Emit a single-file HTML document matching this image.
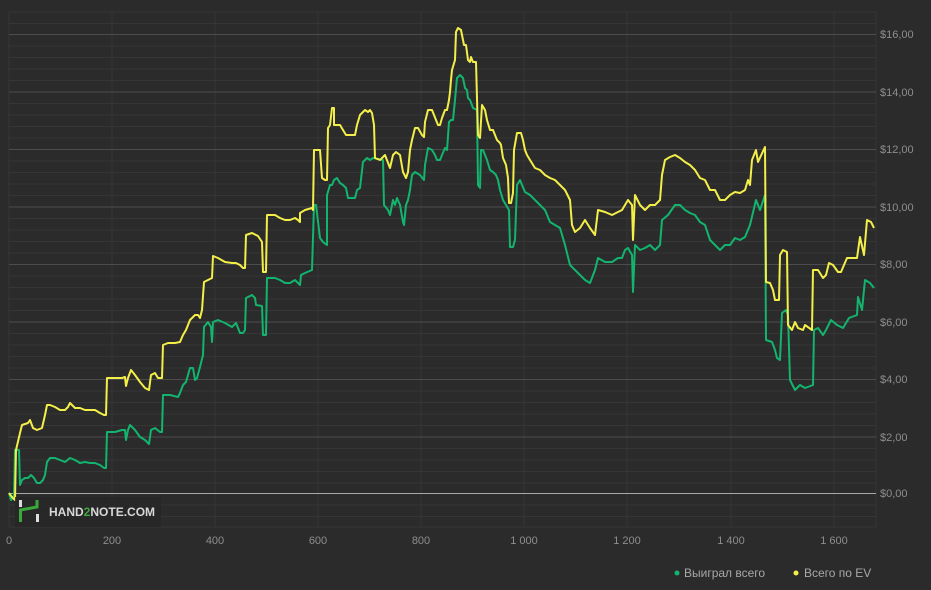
<!DOCTYPE html>
<html><head><meta charset="utf-8"><style>
html,body{margin:0;padding:0;background:#2b2b2b;width:931px;height:590px;overflow:hidden}
svg text{font-family:"Liberation Sans",sans-serif}
</style></head><body>
<svg width="931" height="590" viewBox="0 0 931 590" xmlns="http://www.w3.org/2000/svg">
<rect width="931" height="590" fill="#2b2b2b"/>
<g stroke="#363636" stroke-width="1">
<line x1="9" y1="12" x2="876" y2="12"/>
<line x1="9" y1="23.5" x2="876" y2="23.5"/><line x1="9" y1="46" x2="876" y2="46"/><line x1="9" y1="57.5" x2="876" y2="57.5"/><line x1="9" y1="69" x2="876" y2="69"/><line x1="9" y1="80.5" x2="876" y2="80.5"/>
<line x1="9" y1="103.5" x2="876" y2="103.5"/><line x1="9" y1="115" x2="876" y2="115"/><line x1="9" y1="126.5" x2="876" y2="126.5"/><line x1="9" y1="138" x2="876" y2="138"/>
<line x1="9" y1="161" x2="876" y2="161"/><line x1="9" y1="172.5" x2="876" y2="172.5"/><line x1="9" y1="184" x2="876" y2="184"/><line x1="9" y1="195.5" x2="876" y2="195.5"/>
<line x1="9" y1="218.5" x2="876" y2="218.5"/><line x1="9" y1="230" x2="876" y2="230"/><line x1="9" y1="241.5" x2="876" y2="241.5"/><line x1="9" y1="253" x2="876" y2="253"/>
<line x1="9" y1="276" x2="876" y2="276"/><line x1="9" y1="287.5" x2="876" y2="287.5"/><line x1="9" y1="299" x2="876" y2="299"/><line x1="9" y1="310.5" x2="876" y2="310.5"/>
<line x1="9" y1="333.5" x2="876" y2="333.5"/><line x1="9" y1="345" x2="876" y2="345"/><line x1="9" y1="356.5" x2="876" y2="356.5"/><line x1="9" y1="368" x2="876" y2="368"/>
<line x1="9" y1="391" x2="876" y2="391"/><line x1="9" y1="402.5" x2="876" y2="402.5"/><line x1="9" y1="414" x2="876" y2="414"/><line x1="9" y1="425.5" x2="876" y2="425.5"/>
<line x1="9" y1="448.5" x2="876" y2="448.5"/><line x1="9" y1="460" x2="876" y2="460"/><line x1="9" y1="471.5" x2="876" y2="471.5"/><line x1="9" y1="483" x2="876" y2="483"/>
<line x1="9" y1="505" x2="876" y2="505"/><line x1="9" y1="516.5" x2="876" y2="516.5"/><line x1="9" y1="527" x2="876" y2="527"/>
<line x1="9" y1="12" x2="9" y2="527"/><line x1="112" y1="12" x2="112" y2="527"/><line x1="215" y1="12" x2="215" y2="527"/><line x1="318" y1="12" x2="318" y2="527"/><line x1="421" y1="12" x2="421" y2="527"/><line x1="524" y1="12" x2="524" y2="527"/><line x1="627" y1="12" x2="627" y2="527"/><line x1="731" y1="12" x2="731" y2="527"/><line x1="834" y1="12" x2="834" y2="527"/><line x1="876" y1="12" x2="876" y2="527"/>
</g>
<g stroke="#4c4c4c" stroke-width="1">
<line x1="9" y1="34.5" x2="876" y2="34.5"/><line x1="9" y1="92" x2="876" y2="92"/><line x1="9" y1="149.5" x2="876" y2="149.5"/><line x1="9" y1="207" x2="876" y2="207"/><line x1="9" y1="264.5" x2="876" y2="264.5"/><line x1="9" y1="322" x2="876" y2="322"/><line x1="9" y1="379.5" x2="876" y2="379.5"/><line x1="9" y1="437" x2="876" y2="437"/>
</g>
<line x1="9" y1="493.5" x2="876" y2="493.5" stroke="#a8a8a8" stroke-width="1"/>
<g fill="none" stroke-width="2" stroke-linejoin="round">
<polyline stroke="#12b46e" points="9,493 11,500 14,496 15,450 19,450 20,485 22,480 25,478 28,478 31,475 34,478 37,483 40,483 43,480 45,475 47,462 50,458 55,458 60,460 65,462 70,458 75,460 80,463 85,462 90,463 95,463 100,465 104,468 106,468 107,432 115,432 122,430 125,430 126,440 128,430 130,425 135,430 140,437 145,440 149,444 151,430 155,428 160,432 162,432 163,395 170,395 178,397 180,393 183,385 186,382 190,368 193,368 195,380 197,378 200,367 203,355 204,327 208,322 211,327 212,342 213,322 218,320 225,323 232,327 236,323 240,333 243,333 245,330 246,298 252,295 255,298 256,305 262,306 263,335 266,335 267,278 275,278 280,280 285,283 290,283 295,280 298,283 300,285 301,275 305,273 312,270 314,205 316,205 320,238 323,242 327,245 327,195 330,185 332,185 334,180 337,178 340,183 343,185 346,188 348,198 355,198 357,190 360,188 363,162 367,158 370,160 373,158 383,160 384,205 388,210 390,215 393,200 395,205 397,198 400,205 403,222 404,225 406,205 408,200 410,190 412,175 415,172 420,175 424,180 425,165 428,148 432,150 435,155 437,160 440,160 442,155 445,148 447,150 449,122 451,120 453,120 455,100 457,78 460,75 463,78 465,88 467,90 468,98 470,100 473,108 477,110 478,185 480,188 481,150 483,150 485,155 487,160 490,170 493,172 496,175 498,180 500,190 503,200 506,205 509,210 510,247 513,247 515,240 517,185 520,180 522,185 525,192 530,195 535,200 540,205 545,210 550,222 555,225 560,228 565,245 570,265 575,270 580,275 585,280 590,283 595,270 598,258 605,262 612,262 618,258 622,258 625,250 628,248 632,255 633,292 635,245 640,250 645,248 650,245 655,250 660,245 662,220 668,215 675,205 680,205 685,210 690,213 695,215 700,222 705,225 710,240 715,245 720,250 725,245 730,245 735,238 740,240 745,237 750,225 756,200 760,210 765,195 766,340 772,342 775,350 777,358 780,360 782,313 786,310 788,315 790,380 795,390 800,385 805,388 813,385 814,330 818,328 823,335 826,330 831,320 837,325 843,328 849,318 857,315 858,297 862,310 865,280 870,283 874,288"/>
<polyline stroke="#f3ee48" points="9,493 12,497 15,500 16,450 20,433 22,425 28,423 30,420 33,428 37,430 42,428 45,415 47,405 50,405 55,407 60,410 65,410 68,407 70,403 72,405 75,408 80,408 85,410 90,410 95,410 100,413 104,415 106,415 107,378 115,378 122,378 125,377 126,386 128,378 131,370 135,375 140,382 145,388 149,390 151,375 155,373 158,378 162,378 163,345 168,343 175,343 180,342 183,335 186,330 190,320 195,315 198,315 200,318 202,310 204,282 208,280 212,278 213,256 218,258 225,262 232,263 236,263 240,265 243,268 245,268 246,235 252,233 258,236 262,242 263,272 266,272 267,215 275,215 280,218 285,220 290,220 295,218 298,220 300,222 300,213 305,210 312,208 313,210 314,150 320,150 322,178 325,180 327,180 328,128 330,125 332,108 334,108 334,125 340,125 343,130 346,135 355,135 357,125 360,115 363,112 365,110 368,112 370,110 372,113 374,125 375,158 380,160 385,155 390,168 393,155 396,152 400,155 403,172 406,178 408,172 410,150 412,140 415,128 418,128 422,135 424,137 425,122 428,110 432,110 434,115 436,120 438,125 440,125 442,118 445,110 447,110 449,100 450,92 451,80 452,70 455,60 456,32 458,28 461,30 463,40 464,45 466,45 468,60 470,62 471,57 473,62 476,62 478,135 480,138 482,105 485,110 487,120 490,130 493,130 495,135 497,140 500,143 501,145 503,158 506,165 508,178 509,203 511,203 513,193 514,150 517,133 521,133 523,140 525,150 527,155 530,160 535,168 540,170 545,175 550,178 555,180 560,185 565,190 570,200 572,225 575,232 580,228 585,220 590,228 595,235 598,210 605,212 612,215 618,212 622,210 625,205 628,200 632,205 633,240 635,195 640,205 645,210 650,205 655,205 660,200 662,175 665,160 670,157 675,155 680,158 685,162 690,165 695,170 700,178 705,180 710,190 715,190 720,200 725,200 730,195 735,192 740,193 745,190 748,180 750,185 752,160 756,150 758,162 765,147 766,282 770,283 773,290 775,300 779,300 780,255 783,250 787,252 788,325 792,330 795,322 798,328 803,330 805,325 812,330 813,270 818,270 823,278 826,275 829,263 833,265 838,272 841,272 847,258 857,258 860,237 864,255 867,220 871,222 874,228"/>
</g>
<rect x="15" y="497" width="146" height="30" fill="#272727" opacity="0.85"/>
<rect x="19" y="500" width="3" height="7" fill="#ddd"/>
<rect x="36" y="514" width="3" height="8" fill="#ddd"/>
<path d="M20.5 515 V510 L37 507 V500" fill="none" stroke="#3aa83a" stroke-width="3"/>
<path d="M20.5 522 V515" stroke="#3aa83a" stroke-width="3"/>
<text x="49" y="516" font-size="12" font-weight="bold" fill="#d8d8d8">HAND<tspan fill="#3aa83a">2</tspan>NOTE.COM</text>
<g font-size="11" fill="#8e8e8e">
<text x="880" y="38">$16,00</text><text x="880" y="96">$14,00</text><text x="880" y="153">$12,00</text><text x="880" y="211">$10,00</text><text x="880" y="268">$8,00</text><text x="880" y="326">$6,00</text><text x="880" y="383">$4,00</text><text x="880" y="441">$2,00</text><text x="880" y="497">$0,00</text>
</g>
<g font-size="11" fill="#8e8e8e" text-anchor="middle">
<text x="9" y="544">0</text><text x="112" y="544">200</text><text x="215" y="544">400</text><text x="318" y="544">600</text><text x="421" y="544">800</text><text x="524" y="544">1 000</text><text x="627" y="544">1 200</text><text x="731" y="544">1 400</text><text x="834" y="544">1 600</text>
</g>
<circle cx="677" cy="573" r="2.5" fill="#12b46e"/>
<text x="684" y="577" font-size="12" fill="#a8a8a8">Выиграл всего</text>
<circle cx="796" cy="573" r="2.5" fill="#f3ee48"/>
<text x="804" y="577" font-size="12" fill="#a8a8a8">Всего по EV</text>
</svg>
</body></html>
